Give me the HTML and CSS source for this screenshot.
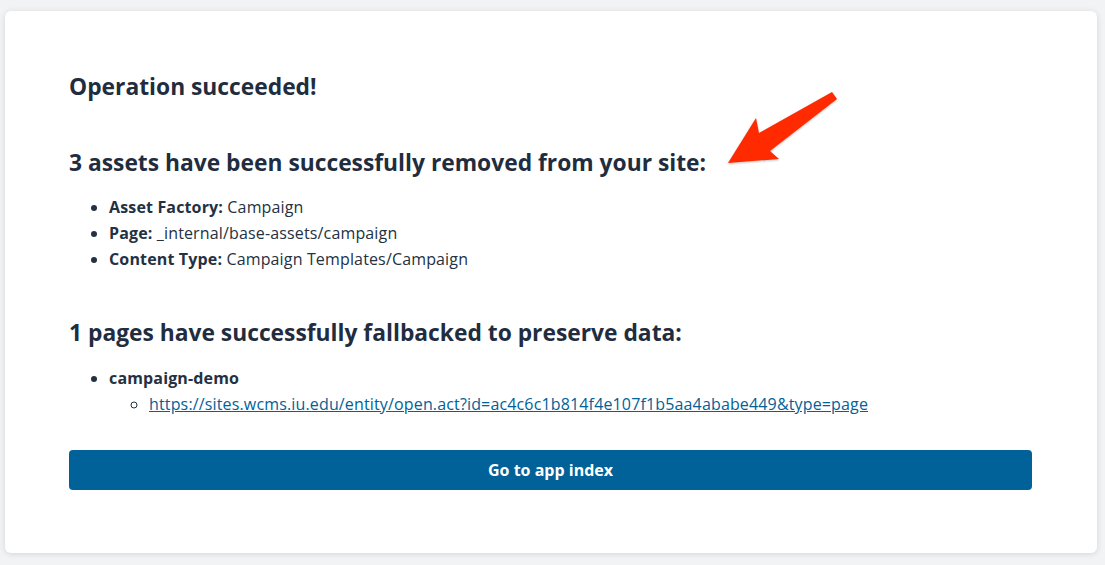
FILE: index.html
```html
<!DOCTYPE html>
<html lang="en">
<head>
  <meta charset="UTF-8">
  <title>Operation succeeded</title>
  <link rel="stylesheet" href="styles.css">
</head>
<body>
  <div class="card">
    <h1 class="title">Operation succeeded!</h1>

    <h2 class="section-title">3 assets have been successfully removed from your site:</h2>
    <ul class="asset-list">
      <li><strong>Asset Factory:</strong> Campaign</li>
      <li><strong>Page:</strong> _internal/base-assets/campaign</li>
      <li><strong>Content Type:</strong> Campaign Templates/Campaign</li>
    </ul>

    <h2 class="section-title section-title--second">1 pages have successfully fallbacked to preserve data:</h2>
    <ul class="asset-list asset-list--pages">
      <li><strong>campaign-demo</strong>
        <ul class="sub-list">
          <li><a href="#">https://sites.wcms.iu.edu/entity/open.act?id=ac4c6c1b814f4e107f1b5aa4ababe449&amp;type=page</a></li>
        </ul>
      </li>
    </ul>

    <a class="btn" href="#">Go to app index</a>

    <!-- annotation arrow -->
    <svg class="arrow" width="130" height="90" viewBox="0 0 130 90">
      <polygon points="6,75 34,30 37,45 110,4 115,11 48,63 57,71" fill="#ff2a00"/>
    </svg>
  </div>
</body>
</html>
```

FILE: styles.css
```css
* { box-sizing: border-box; margin: 0; padding: 0; }
body {
  font-family: "Open Sans", "Liberation Sans", Arial, sans-serif;
  background: #f2f3f5;
  color: #243142;
  padding: 11px 8px 12px 5px;
  min-height: 100vh;
}
.card {
  position: relative;
  background: #fff;
  border-radius: 6px;
  box-shadow: 0 1px 6px rgba(0,0,0,0.12);
  padding: 62px 65px 63px 64px;
  height: 542px;
}
.title {
  font-size: 22.8px;
  font-weight: bold;
  line-height: 28px;
  color: #1f2d3f;
}
.section-title {
  font-size: 22.8px;
  font-weight: bold;
  line-height: 28px;
  color: #1f2d3f;
  margin-top: 48px;
}
.section-title--second { margin-top: 47px; }
.asset-list {
  list-style: disc;
  padding-left: 40px;
  margin-top: 17px;
  font-size: 16px;
  line-height: 26px;
  letter-spacing: 0.15px;
}
.asset-list--pages { margin-top: 18px; }
.sub-list {
  list-style: circle;
  padding-left: 40px;
}
.sub-list a {
  color: #006298;
  text-decoration: underline;
}
.btn {
  display: block;
  margin-top: 33px;
  height: 40px;
  line-height: 40px;
  background: #006298;
  color: #fff;
  text-align: center;
  font-weight: bold;
  font-size: 16px;
  text-decoration: none;
  border-radius: 4px;
}
.arrow {
  position: absolute;
  left: 717px;
  top: 77px;
  filter: drop-shadow(0 1px 1px rgba(0,0,0,0.25));
}
```
